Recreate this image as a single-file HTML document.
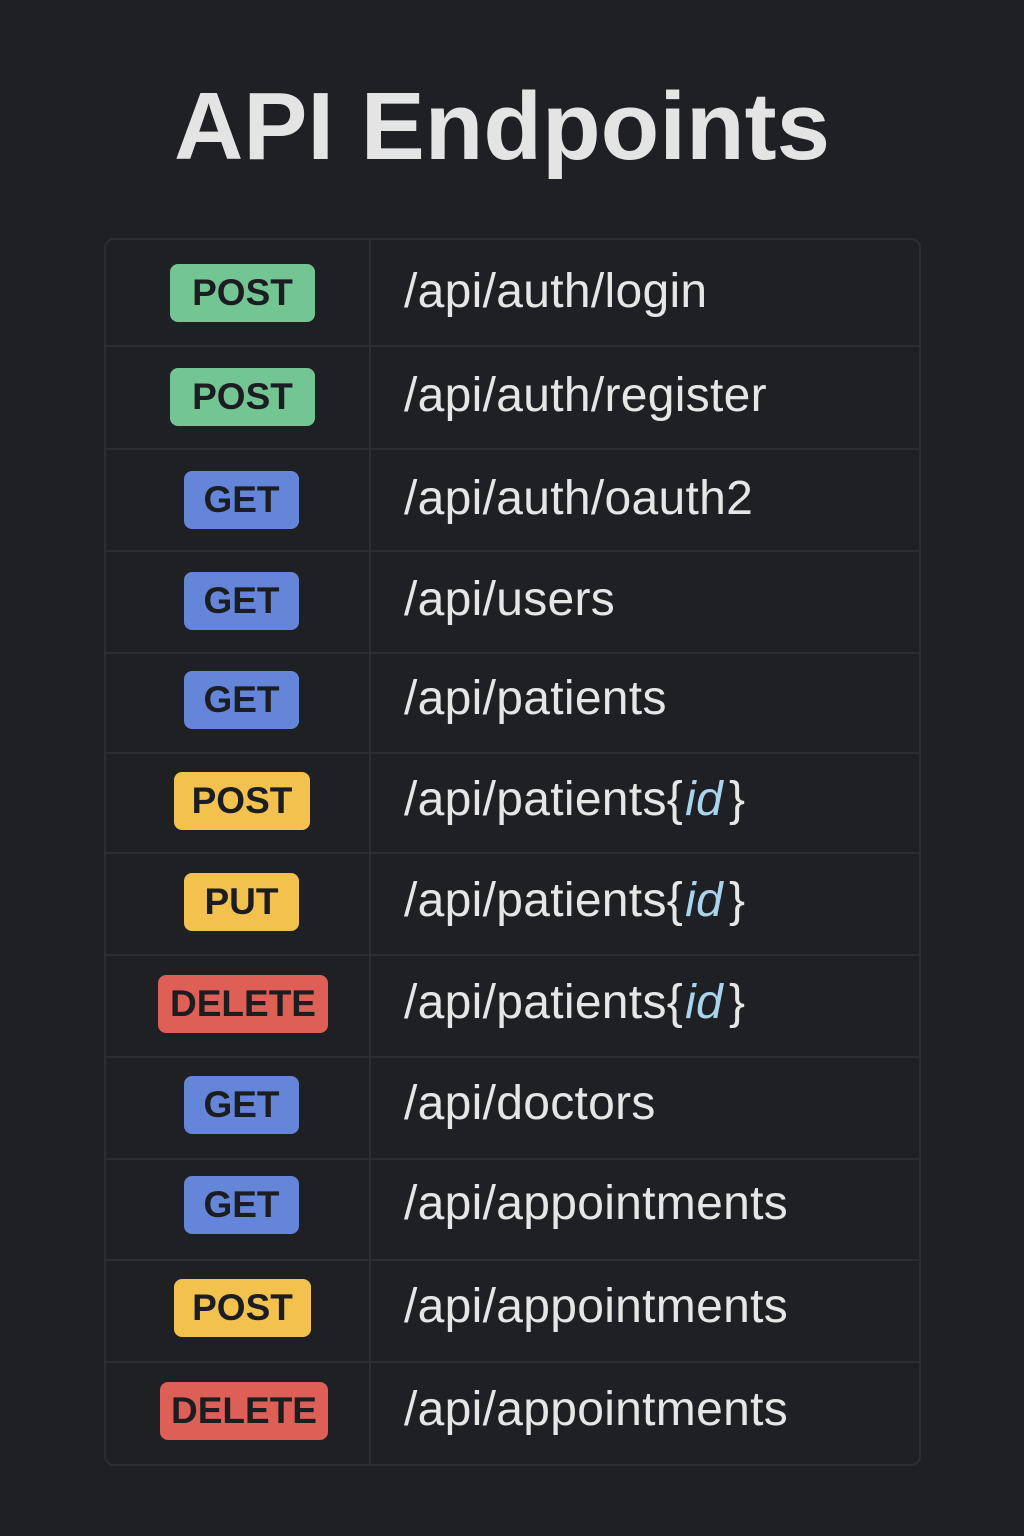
<!DOCTYPE html>
<html><head><meta charset="utf-8"><style>
body{margin:0;width:1024px;height:1536px;background:#1f2023;font-family:"Liberation Sans",sans-serif;position:relative;overflow:hidden}
h1{position:absolute;left:0;width:1004px;top:72px;margin:0;text-align:center;font-size:96px;font-weight:bold;color:#e4e4e4;line-height:110px}
.tbl{position:absolute;left:104px;top:238px;width:817px;height:1228px;border:2px solid #2c2d31;border-radius:10px;box-sizing:border-box}
.vl{position:absolute;left:369px;top:238px;width:2px;height:1226px;background:#2c2d31}
.hl{position:absolute;left:104px;width:817px;height:2px;background:#2c2d31}
.b{position:absolute;height:58px;line-height:58px;border-radius:8px;text-align:center;font-weight:bold;font-size:37px;color:#1c1d20;transform:translateY(-29px)}
.g{background:#74c594}.bl{background:#6485d8}.y{background:#f2c14e}.r{background:#dd5f55}
.p{position:absolute;left:404px;font-size:48px;color:#e6e6e6;line-height:60px;transform:translateY(-31px);letter-spacing:0.3px}
.p i{color:#a9d4ee;margin:0 6px 0 2px}
</style></head><body>
<h1>API Endpoints</h1>
<div class="tbl"></div><div class="vl"></div>
<div class="hl" style="top:345px"></div><div class="hl" style="top:448px"></div><div class="hl" style="top:550px"></div><div class="hl" style="top:652px"></div><div class="hl" style="top:752px"></div><div class="hl" style="top:852px"></div><div class="hl" style="top:954px"></div><div class="hl" style="top:1056px"></div><div class="hl" style="top:1158px"></div><div class="hl" style="top:1259px"></div><div class="hl" style="top:1361px"></div>
<div class="b g" style="left:170px;width:145px;top:293px">POST</div><div class="p" style="top:293px">/api/auth/login</div>
<div class="b g" style="left:170px;width:145px;top:397px">POST</div><div class="p" style="top:397px">/api/auth/register</div>
<div class="b bl" style="left:184px;width:115px;top:500px">GET</div><div class="p" style="top:500px">/api/auth/oauth2</div>
<div class="b bl" style="left:184px;width:115px;top:601px">GET</div><div class="p" style="top:601px">/api/users</div>
<div class="b bl" style="left:184px;width:115px;top:700px">GET</div><div class="p" style="top:700px">/api/patients</div>
<div class="b y" style="left:174px;width:136px;top:801px">POST</div><div class="p" style="top:801px">/api/patients{<i>id</i>}</div>
<div class="b y" style="left:184px;width:115px;top:902px">PUT</div><div class="p" style="top:902px">/api/patients{<i>id</i>}</div>
<div class="b r" style="left:158px;width:170px;top:1004px">DELETE</div><div class="p" style="top:1004px">/api/patients{<i>id</i>}</div>
<div class="b bl" style="left:184px;width:115px;top:1105px">GET</div><div class="p" style="top:1105px">/api/doctors</div>
<div class="b bl" style="left:184px;width:115px;top:1205px">GET</div><div class="p" style="top:1205px">/api/appointments</div>
<div class="b y" style="left:174px;width:137px;top:1308px">POST</div><div class="p" style="top:1308px">/api/appointments</div>
<div class="b r" style="left:160px;width:168px;top:1411px">DELETE</div><div class="p" style="top:1411px">/api/appointments</div>
</body></html>
